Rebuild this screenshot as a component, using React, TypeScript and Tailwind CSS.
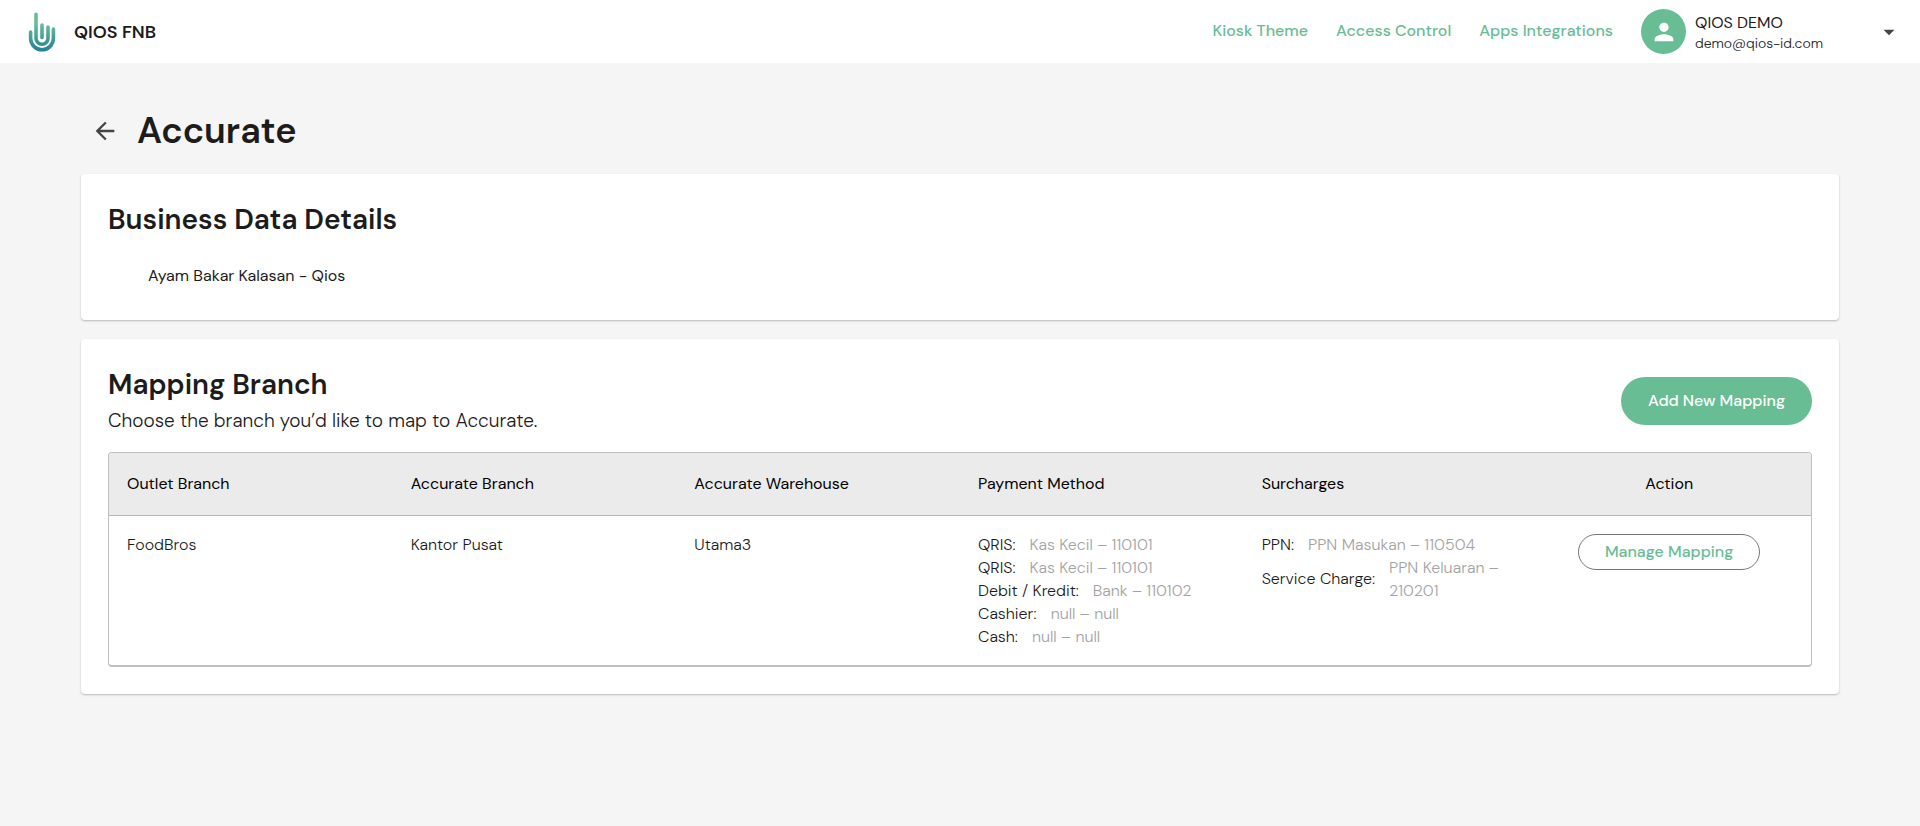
import { MdArrowBack, MdArrowDropDown, MdPerson } from 'react-icons/md'

interface Mapping {
  label: string
  account: string
}

interface BranchRow {
  outlet: string
  branch: string
  warehouse: string
  payments: Mapping[]
  surcharges: Mapping[]
}

const navLinks = ['Kiosk Theme', 'Access Control', 'Apps Integrations']

const columns = ['Outlet Branch', 'Accurate Branch', 'Accurate Warehouse', 'Payment Method', 'Surcharges']

const rows: BranchRow[] = [
  {
    outlet: 'FoodBros',
    branch: 'Kantor Pusat',
    warehouse: 'Utama3',
    payments: [
      { label: 'QRIS', account: 'Kas Kecil – 110101' },
      { label: 'QRIS', account: 'Kas Kecil – 110101' },
      { label: 'Debit / Kredit', account: 'Bank – 110102' },
      { label: 'Cashier', account: 'null – null' },
      { label: 'Cash', account: 'null – null' },
    ],
    surcharges: [
      { label: 'PPN', account: 'PPN Masukan – 110504' },
      { label: 'Service Charge', account: 'PPN Keluaran – 210201' },
    ],
  },
]

function Logo() {
  return (
    <svg viewBox="0 0 28 40" className="h-10 w-7" fill="none" aria-hidden="true">
      <defs>
        <linearGradient id="logo" x1="0" y1="0" x2="0" y2="40" gradientUnits="userSpaceOnUse">
          <stop offset="0.3" stopColor="#68bd94" />
          <stop offset="1" stopColor="#217f98" />
        </linearGradient>
      </defs>
      <g stroke="url(#logo)" strokeWidth="3.6" strokeLinecap="round">
        <path d="M2.6 20v6.3a11.4 11.4 0 0 0 22.8 0V17" />
        <path d="M8 2.2v24.1a6 6 0 0 0 12 0V15" />
        <path d="M14 13v12.5" />
      </g>
    </svg>
  )
}

function Header() {
  return (
    <header className="flex h-[63px] items-center bg-white pl-7 pr-[18px]">
      <Logo />
      <span className="ml-[18px] text-lg font-semibold">QIOS FNB</span>
      <nav className="ml-auto flex gap-7 pr-7 pb-0.5 text-base font-medium text-[#68bd94]">
        {navLinks.map((link) => (
          <a key={link} href="#">
            {link}
          </a>
        ))}
      </nav>
      <button type="button" className="flex w-[261px] items-center text-left">
        <span className="flex size-[45px] items-center justify-center rounded-full bg-[#68bd94] text-white">
          <MdPerson size={28} />
        </span>
        <span className="ml-[9px] flex-1 pt-0.5">
          <span className="block text-base leading-5">QIOS DEMO</span>
          <span className="block text-sm leading-5 font-light">demo@qios-id.com</span>
        </span>
        <MdArrowDropDown size={26} className="text-[#444]" />
      </button>
    </header>
  )
}

function MappingList({ items }: { items: Mapping[] }) {
  return (
    <dl>
      {items.map((item, i) => (
        <div key={i} className="flex items-center gap-3.5">
          <dt className="whitespace-nowrap">{item.label}:</dt>
          <dd className="text-[#a3a3a3]">{item.account}</dd>
        </div>
      ))}
    </dl>
  )
}

function BranchTable() {
  return (
    <div className="mt-[17px] overflow-hidden rounded border border-b-2 border-[#bfbfbf]">
      <table className="w-full table-fixed border-collapse text-left text-base leading-[23px]">
        <thead className="bg-[#ebebeb] text-black">
          <tr className="h-[62px] border-b border-[#b5b5b5]">
            {columns.map((column) => (
              <th key={column} className="px-[18px] font-normal">
                {column}
              </th>
            ))}
            <th className="px-[18px] text-center font-normal">Action</th>
          </tr>
        </thead>
        <tbody>
          {rows.map((row) => (
            <tr key={row.outlet} className="align-top font-light">
              <td className="px-[18px] py-[17px]">{row.outlet}</td>
              <td className="px-[18px] py-[17px]">{row.branch}</td>
              <td className="px-[18px] py-[17px]">{row.warehouse}</td>
              <td className="px-[18px] py-[17px]">
                <MappingList items={row.payments} />
              </td>
              <td className="px-[18px] py-[17px]">
                <MappingList items={row.surcharges} />
              </td>
              <td className="p-[18px] text-center">
                <button
                  type="button"
                  className="h-9 w-[182px] rounded-full border border-[#777] font-medium text-[#68bd94]"
                >
                  Manage Mapping
                </button>
              </td>
            </tr>
          ))}
        </tbody>
      </table>
    </div>
  )
}

export default function App() {
  return (
    <div className="min-h-screen bg-[#f5f5f5] font-['DM_Sans','Inter',sans-serif] text-[#1c1c1c]">
      <Header />
      <main className="px-[81px] pb-12 pt-[43px]">
        <div className="flex items-center gap-[18px] pl-2.5">
          <button type="button" aria-label="Back" className="text-[#444]">
            <MdArrowBack size={28} />
          </button>
          <h1 className="text-4xl leading-[50px] font-semibold">Accurate</h1>
        </div>

        <section className="mt-[18px] rounded bg-white px-[27px] pb-8 pt-7 shadow-[0_1px_2px_rgba(0,0,0,0.25)]">
          <h2 className="text-[28px] leading-9 font-semibold">Business Data Details</h2>
          <p className="ml-10 mt-[26px] text-base leading-6">Ayam Bakar Kalasan - Qios</p>
        </section>

        <section className="mt-[19px] rounded bg-white px-[27px] pb-[27px] pt-7 shadow-[0_1px_2px_rgba(0,0,0,0.25)]">
          <div className="flex items-center justify-between">
            <div>
              <h2 className="text-[28px] leading-9 font-semibold">Mapping Branch</h2>
              <p className="mt-1 text-[19px] leading-7 font-light">
                Choose the branch you’d like to map to Accurate.
              </p>
            </div>
            <button type="button" className="h-12 w-[191px] rounded-full bg-[#68bd94] font-medium text-white">
              Add New Mapping
            </button>
          </div>
          <BranchTable />
        </section>
      </main>
    </div>
  )
}
